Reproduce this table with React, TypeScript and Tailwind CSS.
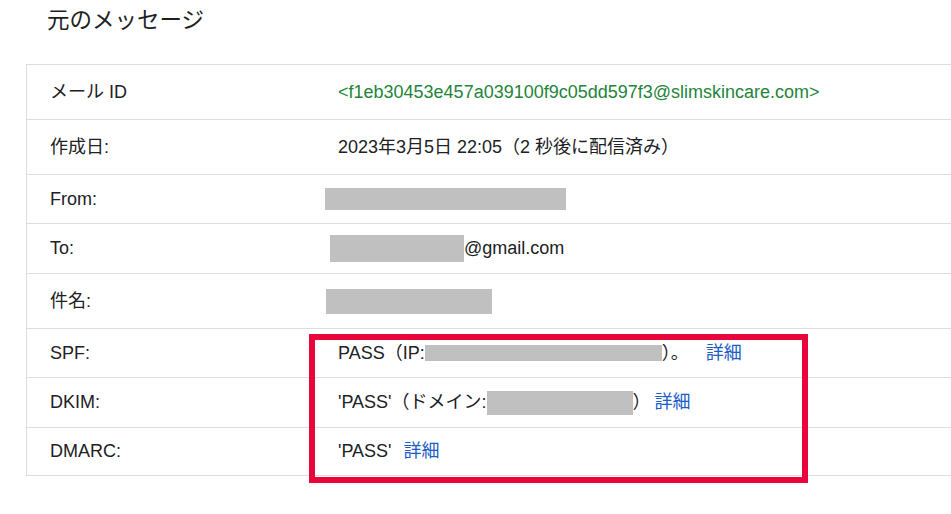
import React from "react";

const font = { fontFamily: '"Liberation Sans", "Noto Sans CJK JP", sans-serif' };

function Redact({ w, h = "h-[24px]" }: { w: string; h?: string }) {
  return <span className={`inline-block bg-[#c0c0c0] align-middle ${w} ${h}`} />;
}

type Row = { label: string; h: string; value: React.ReactNode };

const rows: Row[] = [
  {
    label: "メール ID",
    h: "h-[55px]",
    value: <span className="text-[#23853a]">&lt;f1eb30453e457a039100f9c05dd597f3@slimskincare.com&gt;</span>,
  },
  { label: "作成日:", h: "h-[55px]", value: <span>2023年3月5日 22:05（2 秒後に配信済み）</span> },
  { label: "From:", h: "h-[49px]", value: <span className="-ml-[13px] flex"><Redact w="w-[241px]" h="h-[22px]" /></span> },
  {
    label: "To:",
    h: "h-[50px]",
    value: (
      <span className="-ml-[8px] flex items-center">
        <Redact w="w-[134px]" h="h-[27px]" />
        <span>@gmail.com</span>
      </span>
    ),
  },
  { label: "件名:", h: "h-[55px]", value: <span className="-ml-[12px] flex"><Redact w="w-[166px]" h="h-[25px]" /></span> },
  {
    label: "SPF:",
    h: "h-[49px]",
    value: (
      <span className="flex items-center">
        PASS（IP:<Redact w="w-[237px]" h="h-[16px]" />）。<span className="text-[#1a5dc6] ml-[17px]">詳細</span>
      </span>
    ),
  },
  {
    label: "DKIM:",
    h: "h-[50px]",
    value: (
      <span className="flex items-center">
        'PASS'（ドメイン:<Redact w="w-[146px]" h="h-[24px]" />）
        <span className="text-[#1a5dc6] ml-[4px]">詳細</span>
      </span>
    ),
  },
  {
    label: "DMARC:",
    h: "h-[48px]",
    value: (
      <span className="flex items-center">
        'PASS'<span className="text-[#1a5dc6] ml-[12px]">詳細</span>
      </span>
    ),
  },
];

export default function App() {
  return (
    <div className="w-[951px] h-[514px] bg-white overflow-hidden text-[#202124]" style={font}>
      <h1 className="pl-[47px] pt-[6px] h-[64px] text-[22.5px] leading-[30px] font-normal text-[#1f1f1f]">
        元のメッセージ
      </h1>
      <div className="relative ml-[26px]">
        <div className="border-l border-t border-[#dedede]">
          {rows.map((r) => (
            <div key={r.label} className={`flex items-center border-b border-[#dedede] ${r.h} text-[18px]`}>
              <div className="w-[311px] pl-[23px] shrink-0">{r.label}</div>
              <div className="flex items-center whitespace-nowrap">{r.value}</div>
            </div>
          ))}
        </div>
        {/* annotation frame */}
        <div className="absolute left-[283px] top-[270px] w-[499px] h-[149px] border-[6px] border-[#e8063c] pointer-events-none" />
      </div>
    </div>
  );
}
